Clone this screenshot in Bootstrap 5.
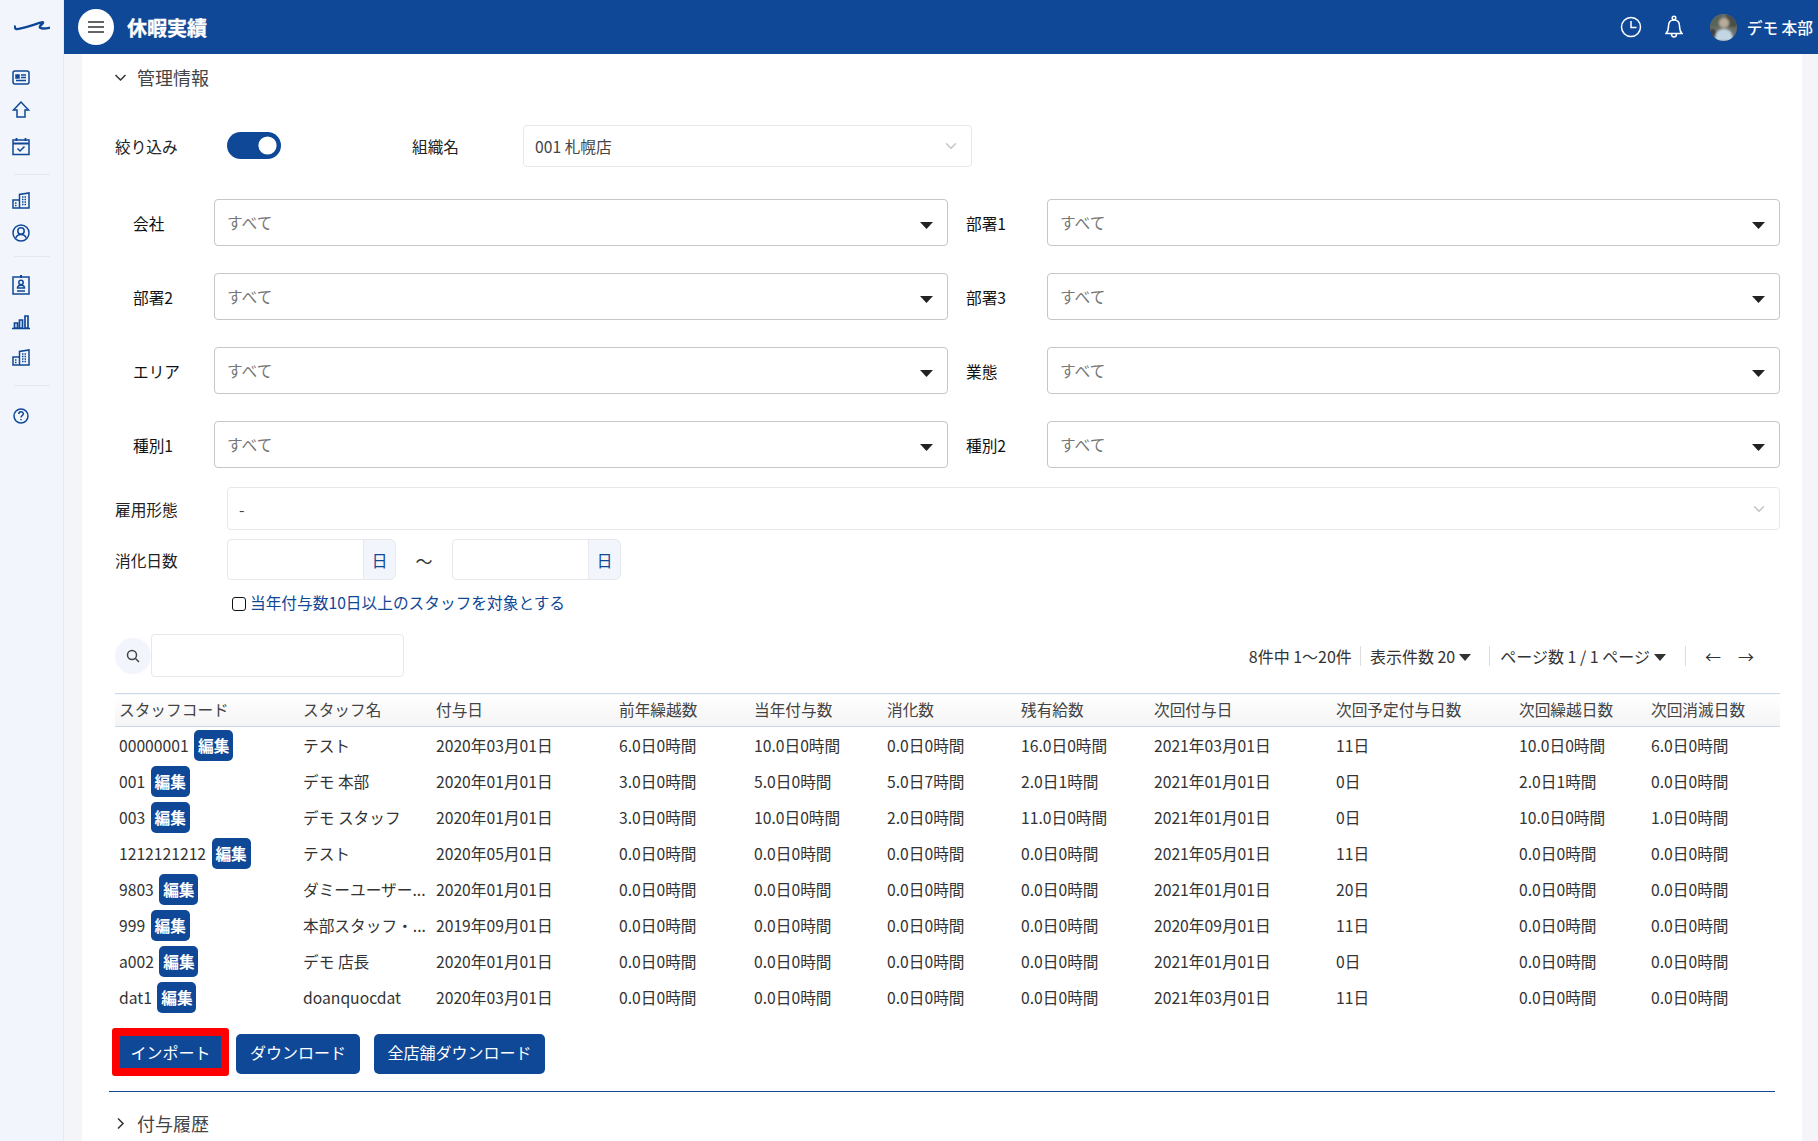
<!DOCTYPE html>
<html lang="ja">

<head>
  <meta charset="UTF-8">
  <title>休暇実績</title>
  <link href="https://cdn.jsdelivr.net/npm/bootstrap@5.3.3/dist/css/bootstrap.min.css" rel="stylesheet">
  <style>
    body {
      font-family: "Noto Sans CJK JP", "Noto Sans", sans-serif;
      font-size: 15.7px;
      color: #333;
      height: 100vh;
      overflow: hidden;
      background: #f3f5f9;
    }

    /* sidebar */
    .side-bar {
      width: 64px;
      flex: none;
      background: #f2f5fb;
      border-right: 1px solid #e6e9ef;
      padding: 21px 0 0 14px;
    }

    .side-logo {
      height: 12px;
      margin-bottom: 34px;
    }

    .side-ico {
      display: block;
      width: 18px;
      height: 22px;
      margin-left: -2px;
      fill: none;
      stroke: #0f4897;
      stroke-width: 1.5;
    }

    .side-ico.g10 { margin-top: 10px; }
    .side-ico.g13 { margin-top: 13px; }
    .side-ico.g15 { margin-top: 15px; }
    .side-ico.g16 { margin-top: 16px; }

    .side-line {
      width: 36px;
      height: 1px;
      background: #e3e6ec;
      margin: 16px 0 15px;
    }

    .side-line.l2 { margin: 12px 0 17px; }
    .side-line.l3 { margin: 16px 0 19px; }

    /* header */
    .top-bar {
      height: 54px;
      flex: none;
      background: #0f4897;
      color: #fff;
      padding: 0 5px 0 14px;
    }

    .menu-round {
      width: 36px;
      height: 36px;
      border-radius: 50%;
      background: #fff;
    }

    .page-name {
      font-size: 20px;
      font-weight: 700;
      margin-left: 13px;
      padding-top: 2px;
      -webkit-text-stroke: .3px #fff;
    }

    .bell-ico {
      margin-left: 23px;
    }

    .user-name {
      font-size: 15.7px;
      margin-left: 10px;
      padding-top: 2px;
      font-weight: 500;
    }

    .avatar-round {
      width: 27px;
      height: 27px;
      border-radius: 50%;
      margin-left: 27px;
    }

    /* panel */
    .work-panel {
      flex: 1;
      background: #fff;
      margin: 0 16px 0 18px;
      padding: 0 22px 0 33px;
      overflow: hidden;
    }

    .sect-head {
      height: 30px;
      margin: 8px 0 0 -1px;
      font-size: 18px;
      color: #444;
    }

    .sect-head svg {
      width: 13px;
      height: 13px;
      margin-right: 10px;
      fill: none;
      stroke: #333;
      stroke-width: 1.5;
    }

    .filter-top {
      margin-top: 33px;
      height: 42px;
    }

    .form-switch.big-switch {
      width: 54px;
      height: 27px;
      padding: 0;
      margin: -1px 0 0;
      min-height: 0;
    }

    .form-switch.big-switch .form-check-input {
      width: 54px;
      height: 27px;
      margin: 0;
      border: 0;
      background-color: #0f4897;
      background-position: right center;
      background-size: 27px 27px;
      background-image: url("data:image/svg+xml,%3csvg xmlns='http://www.w3.org/2000/svg' viewBox='-4 -4 8 8'%3e%3ccircle r='2.7' fill='%23fff'/%3e%3c/svg%3e");
    }

    .soft-select {
      border: 1px solid #e7e8ec;
      border-radius: 4px;
      height: 42px;
      font-size: 15.7px;
      color: #444;
      padding: 7px 36px 5px 11px;
      background-size: 16px 12px;
      --bs-form-select-bg-img: url("data:image/svg+xml,%3csvg xmlns='http://www.w3.org/2000/svg' viewBox='0 0 16 16'%3e%3cpath fill='none' stroke='%23c4c4c4' stroke-linecap='round' stroke-linejoin='round' stroke-width='2' d='m2 5 6 6 6-6'/%3e%3c/svg%3e");
    }

    .org-select {
      width: 449px;
    }

    .grid-filter {
      margin-top: 32px;
      display: grid;
      grid-template-columns: 99px 734px 99px 733px;
      row-gap: 27px;
      align-items: center;
    }

    .grid-filter label {
      color: #111;
      padding: 2px 0 0 18px;
    }

    .dark-select {
      height: 47px;
      border: 1px solid #c6c6c6;
      border-radius: 4px;
      font-size: 15.7px;
      color: #777;
      padding: 6px 36px 6px 12px;
      background-size: 13px 7px;
      background-position: right 14px top 21.5px;
      --bs-form-select-bg-img: url("data:image/svg+xml,%3csvg xmlns='http://www.w3.org/2000/svg' viewBox='0 0 13 7'%3e%3cpath fill='%23222' d='M0 0h13L6.5 7z'/%3e%3c/svg%3e");
    }

    .lbl-col {
      width: 112px;
      flex: none;
      color: #222;
      padding-top: 2px;
    }

    .lbl-org {
      width: 111px;
      margin-left: 131px;
    }

    .row-emp {
      margin-top: 19px;
    }

    .row-emp .soft-select {
      height: 43px;
      flex: 1;
    }

    .row-days {
      margin-top: 9px;
    }

    .days-group {
      width: 169px;
      height: 41px;
    }

    .days-group .form-control {
      border-color: #e7e8ec;
      border-radius: 4px 0 0 4px;
    }

    .days-group .input-group-text {
      background: #f2f5fb;
      border-color: #e7e8ec;
      color: #0f4897;
      width: 33px;
      padding: 2px 0 0;
      justify-content: center;
      font-size: 15.7px;
    }

    .wave-mark {
      width: 56px;
      text-align: center;
      font-size: 17px;
      padding-top: 2px;
    }

    .row-check {
      margin: 13px 0 0 112px;
      height: 20px;
      padding-left: 5px;
      color: #0f4897;
    }

    .row-check .form-check-input {
      width: 14px;
      height: 14px;
      margin: 2px 4px 0 0;
      border: 1.8px solid #111;
      border-radius: 3px;
    }

    .row-search {
      margin-top: 21px;
      height: 43px;
    }

    .find-round {
      width: 36px;
      height: 36px;
      border-radius: 50%;
      background: #f2f5fb;
    }

    .find-box {
      width: 253px;
      height: 43px;
      border: 1px solid #e7e8ec;
      border-radius: 4px;
    }

    .page-info {
      color: #333;
      font-size: 16px;
      margin-right: 26px;
    }

    .page-info .sep {
      width: 1px;
      height: 20px;
      background: #ddd;
    }

    .page-info .sep.s1 { margin: 0 9px 0 8px; }
    .page-info .sep.s2 { margin: 0 10px 0 18px; }
    .page-info .sep.s3 { margin: 0 19px 0 19px; }
    .page-info .next-arrow { margin-left: 17px; }

    .tri-down {
      display: inline-block;
      width: 0;
      height: 0;
      border: 6.5px solid transparent;
      border-top: 7px solid #333;
      border-bottom: 0;
      margin-left: 4px;
      vertical-align: 2px;
    }

    .staff-table {
      margin: 16px 0 0;
      table-layout: fixed;
      width: 1665px;
      font-size: 15.7px;
    }

    .staff-table th {
      height: 33px;
      padding: 0 4px;
      font-weight: 400;
      color: #444;
      vertical-align: middle;
      background: linear-gradient(#fff, #f4f4f4);
      border-top: 1px solid #c9d7ea;
      border-bottom: 1px solid #c9d7ea;
      white-space: nowrap;
    }

    .staff-table th+th {
      padding-left: 5px;
    }

    .staff-table td {
      height: 36px;
      padding: 2px 4px 0;
      color: #333;
      border: 0;
      vertical-align: middle;
      white-space: nowrap;
    }

    .staff-table td+td {
      padding-left: 5px;
    }

    .edit-chip {
      display: inline-block;
      width: 39px;
      height: 31px;
      line-height: 30px;
      padding: 0;
      border: 0;
      border-radius: 5px;
      margin-left: 2px;
      background: #0f4897;
      color: #fff;
      font-size: 15.7px;
      font-weight: 700;
      text-align: center;
    }

    .btn-row {
      margin: 13px 0 0 -3px;
      height: 48px;
    }

    .btn-blue {
      background: #0f4897;
      color: #fff;
      height: 40px;
      margin-top: 6px;
      padding: 0 0 3px;
      border-radius: 5px;
      font-size: 16px;
      border: 0;
    }

    .btn-blue.red-mark {
      height: 48px;
      margin-top: 0;
      width: 117px;
      padding: 0;
      border: 8px solid #f00;
      border-radius: 3px;
    }

    .btn-down {
      width: 124px;
      margin-left: 7px;
    }

    .btn-all {
      width: 171px;
      margin-left: 14px;
    }

    .sect-rule {
      margin: 15px 5px 0 -6px;
      border: 0;
      height: 1.5px;
      background: #0f4897;
      opacity: 1;
    }

    .sect-head.closed {
      margin-top: 16px;
    }
  </style>
</head>

<body class="d-flex">

  <nav class="side-bar">
    <svg class="side-logo d-block" width="36" viewBox="0 0 36 12" fill="none" stroke="#0f4897" stroke-linecap="round" stroke-linejoin="round" stroke-width="2.4">
      <path d="M.8 5.500c.2 3 2 3 5 2.200 4-1 9-2.400 13-3.600 4-1.200 8-3 10-2.800 1.500.2-3 3.500-3 4.500 0 2 4 2.200 9.500 1" />
    </svg>
    <svg class="side-ico" viewBox="0 0 18 22"><rect x="1" y="4" width="16" height="13" rx="2" /><path d="M4 8h3v3H4z" fill="#0f4897" /><path d="M9 8h5M9 10.500h5M4 13.500h10" /></svg>
    <svg class="side-ico g10" viewBox="0 0 18 22"><path d="M9 3 1.500 11H5v7h8v-7h3.500z" /></svg>
    <svg class="side-ico g15" viewBox="0 0 18 22"><rect x="1" y="4" width="16" height="14.500" /><path d="M1 7.500h16M4.500 2v3M13.500 2v3" stroke-width="1.800" /><path d="m5.500 12.500 2.500 2.500 4.500-4.500" /></svg>
    <div class="side-line"></div>
    <svg class="side-ico" viewBox="0 0 18 22"><path d="M1 10h6.500v8H1zM7.500 18V4.500L17 3v15z" /><path d="M3 13h2M3 15.500h2M10 7h5M10 9.500h5M10 12h5M10 14.500h5" stroke-dasharray="1.500 1" /></svg>
    <svg class="side-ico g10" viewBox="0 0 18 22"><circle cx="9" cy="11" r="8" /><circle cx="9" cy="9" r="3.200" /><path d="M3.800 16c1-3 3-3.500 5.200-3.500s4.200.5 5.200 3.500" /></svg>
    <div class="side-line l2"></div>
    <svg class="side-ico" viewBox="0 0 18 22"><rect x="1" y="3" width="16" height="17" /><path d="M9 1v3" stroke-width="2" /><circle cx="9" cy="8.500" r="2.200" /><path d="M5.500 14c0-2 1.500-2.800 3.500-2.800s3.500.8 3.500 2.800zM5 17h8" /></svg>
    <svg class="side-ico g13" viewBox="0 0 18 22"><path d="M2.500 14h3v5h-3zM7.500 11h3v8h-3zM13 7h3v12h-3zM0 19.500h18" stroke-width="1.700" /></svg>
    <svg class="side-ico g16" viewBox="0 0 18 22"><path d="M1 10h6.500v8H1zM7.500 18V4.500L17 3v15z" /><path d="M3 13h2M3 15.500h2M10 7h5M10 9.500h5M10 12h5M10 14.500h5" stroke-dasharray="1.500 1" /></svg>
    <div class="side-line l3"></div>
    <svg class="side-ico" viewBox="0 0 18 22"><circle cx="9" cy="11" r="7" /><path d="M6.800 9c0-3 4.500-3 4.500-.2 0 2-2.300 1.800-2.300 3.700" /><path d="M9 14v1.200" /></svg>
  </nav>

  <div class="d-flex flex-column flex-grow-1">
    <header class="top-bar d-flex align-items-center">
      <button class="menu-round btn p-0 d-flex align-items-center justify-content-center" aria-label="menu">
        <svg width="16" height="12" viewBox="0 0 16 12" stroke="#333" stroke-width="1.600"><path d="M0 1h16M0 6h16M0 11h16" /></svg>
      </button>
      <span class="page-name">休暇実績</span>
      <div class="ms-auto d-flex align-items-center">
        <svg width="22" height="22" viewBox="0 0 22 22" fill="none" stroke="#fff" stroke-width="1.500"><circle cx="11" cy="11" r="9.500" /><path d="M11 5v6.500h5.500" /></svg>
        <svg class="bell-ico" width="18" height="24" viewBox="0 0 18 24" fill="none" stroke="#fff" stroke-width="1.500"><circle cx="9" cy="3" r="1.800" /><path d="M1 18.500h16c-2-2-2.500-3.500-2.500-7.500 0-3.500-2-6-5.500-6s-5.500 2.500-5.500 6c0 4-.5 5.500-2.500 7.500zM6.500 19c0 4 5 4 5 0" /></svg>
        <svg class="avatar-round" viewBox="0 0 27 27">
          <defs><filter id="soft"><feGaussianBlur stdDeviation="1" /></filter></defs>
          <rect width="27" height="27" fill="#6d6f68" />
          <g filter="url(#soft)">
            <rect x="0" y="0" width="12" height="13" fill="#59645a" />
            <rect x="16" y="0" width="11" height="13" fill="#4a4f4a" />
            <circle cx="2" cy="20" r="5" fill="#3d4042" />
            <circle cx="14" cy="9" r="5" fill="#b9ab9a" />
            <path d="M5 27c0-10 4-12 9-12s9 2 9 12z" fill="#c3d6e4" />
          </g>
        </svg>
        <span class="user-name">デモ 本部</span>
      </div>
    </header>

    <main class="work-panel">
      <div class="sect-head d-flex align-items-center">
        <svg viewBox="0 0 13 13"><path d="m1.500 4 5 5 5-5" /></svg>
        <span>管理情報</span>
      </div>

      <div class="filter-top d-flex align-items-center">
        <span class="lbl-col">絞り込み</span>
        <div class="form-check form-switch big-switch">
          <input class="form-check-input" type="checkbox" role="switch" checked>
        </div>
        <span class="lbl-col lbl-org">組織名</span>
        <select class="form-select soft-select org-select">
          <option>001 札幌店</option>
        </select>
      </div>

      <div class="grid-filter">
        <label>会社</label>
        <select class="form-select dark-select"><option>すべて</option></select>
        <label>部署1</label>
        <select class="form-select dark-select"><option>すべて</option></select>
        <label>部署2</label>
        <select class="form-select dark-select"><option>すべて</option></select>
        <label>部署3</label>
        <select class="form-select dark-select"><option>すべて</option></select>
        <label>エリア</label>
        <select class="form-select dark-select"><option>すべて</option></select>
        <label>業態</label>
        <select class="form-select dark-select"><option>すべて</option></select>
        <label>種別1</label>
        <select class="form-select dark-select"><option>すべて</option></select>
        <label>種別2</label>
        <select class="form-select dark-select"><option>すべて</option></select>
      </div>

      <div class="row-emp d-flex align-items-center">
        <span class="lbl-col">雇用形態</span>
        <select class="form-select soft-select"><option>-</option></select>
      </div>

      <div class="row-days d-flex align-items-center">
        <span class="lbl-col">消化日数</span>
        <div class="input-group days-group">
          <input type="text" class="form-control">
          <span class="input-group-text">日</span>
        </div>
        <span class="wave-mark">～</span>
        <div class="input-group days-group">
          <input type="text" class="form-control">
          <span class="input-group-text">日</span>
        </div>
      </div>

      <div class="row-check d-flex align-items-center">
        <input class="form-check-input" type="checkbox" id="chk10">
        <label for="chk10">当年付与数10日以上のスタッフを対象とする</label>
      </div>

      <div class="row-search d-flex align-items-center">
        <span class="find-round d-flex align-items-center justify-content-center">
          <svg width="14" height="14" viewBox="0 0 14 14" fill="none" stroke="#444" stroke-width="1.500"><circle cx="6" cy="6" r="4.500" /><path d="m9.500 9.500 3.500 3.500" /></svg>
        </span>
        <input type="text" class="find-box form-control">
        <div class="page-info ms-auto d-flex align-items-center">
          <span>8件中 1～20件</span>
          <span class="sep s1"></span>
          <span>表示件数 20<i class="tri-down"></i></span>
          <span class="sep s2"></span>
          <span>ページ数 1 / 1 ページ<i class="tri-down"></i></span>
          <span class="sep s3"></span>
          <span>←</span>
          <span class="next-arrow">→</span>
        </div>
      </div>

      <table class="table staff-table">
        <colgroup>
          <col style="width:183px"><col style="width:133px"><col style="width:183px"><col style="width:135px"><col style="width:133px"><col style="width:134px"><col style="width:133px"><col style="width:182px"><col style="width:183px"><col style="width:132px"><col style="width:134px">
        </colgroup>
        <thead>
          <tr>
            <th>スタッフコード</th>
            <th>スタッフ名</th>
            <th>付与日</th>
            <th>前年繰越数</th>
            <th>当年付与数</th>
            <th>消化数</th>
            <th>残有給数</th>
            <th>次回付与日</th>
            <th>次回予定付与日数</th>
            <th>次回繰越日数</th>
            <th>次回消滅日数</th>
          </tr>
        </thead>
        <tbody id="staff-body"></tbody>
      </table>

      <div class="btn-row d-flex align-items-start">
        <button class="btn btn-blue red-mark">インポート</button>
        <button class="btn btn-blue btn-down">ダウンロード</button>
        <button class="btn btn-blue btn-all">全店舗ダウンロード</button>
      </div>

      <hr class="sect-rule">

      <div class="sect-head closed d-flex align-items-center">
        <svg viewBox="0 0 13 13"><path d="m4 1.500 5 5-5 5" /></svg>
        <span>付与履歴</span>
      </div>
    </main>
  </div>

  <script>
    const z = '0.0日0時間';
    const rows = [
      ['00000001', 'テスト', '2020年03月01日', '6.0日0時間', '10.0日0時間', z, '16.0日0時間', '2021年03月01日', '11日', '10.0日0時間', '6.0日0時間'],
      ['001', 'デモ 本部', '2020年01月01日', '3.0日0時間', '5.0日0時間', '5.0日7時間', '2.0日1時間', '2021年01月01日', '0日', '2.0日1時間', z],
      ['003', 'デモ スタッフ', '2020年01月01日', '3.0日0時間', '10.0日0時間', '2.0日0時間', '11.0日0時間', '2021年01月01日', '0日', '10.0日0時間', '1.0日0時間'],
      ['1212121212', 'テスト', '2020年05月01日', z, z, z, z, '2021年05月01日', '11日', z, z],
      ['9803', 'ダミーユーザー...', '2020年01月01日', z, z, z, z, '2021年01月01日', '20日', z, z],
      ['999', '本部スタッフ・...', '2019年09月01日', z, z, z, z, '2020年09月01日', '11日', z, z],
      ['a002', 'デモ 店長', '2020年01月01日', z, z, z, z, '2021年01月01日', '0日', z, z],
      ['dat1', 'doanquocdat', '2020年03月01日', z, z, z, z, '2021年03月01日', '11日', z, z]
    ];
    const tbody = document.getElementById('staff-body');
    rows.forEach(r => {
      const cells = r.slice(1).map(c => `<td>${c}</td>`).join('');
      tbody.innerHTML += `<tr><td>${r[0]} <button class="edit-chip">編集</button></td>${cells}</tr>`;
    });
  </script>
  <script src="https://cdn.jsdelivr.net/npm/bootstrap@5.3.3/dist/js/bootstrap.bundle.min.js"></script>
</body>

</html>
